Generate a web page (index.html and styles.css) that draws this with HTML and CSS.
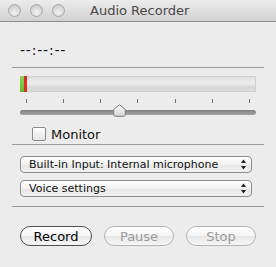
FILE: index.html
```html
<!DOCTYPE html>
<html>
<head>
<meta charset="utf-8">
<link rel="stylesheet" href="styles.css">
</head>
<body>
<div class="window">
  <div class="titlebar">
    <div class="lights">
      <span class="light"></span><span class="light"></span><span class="light"></span>
    </div>
    <div class="title">Audio Recorder</div>
  </div>
  <div class="content">
    <div class="timer">--:--:--</div>
    <div class="sep sep1"></div>
    <div class="meter">
      <span class="lvl green"></span><span class="lvl red"></span>
    </div>
    <div class="ticks">
      <span></span><span></span><span></span><span></span><span></span><span></span><span></span>
    </div>
    <div class="slider">
      <div class="track"></div>
      <svg class="knob" width="13" height="13" viewBox="0 0 13 13">
        <defs>
          <linearGradient id="kg" x1="0" y1="0" x2="0" y2="1">
            <stop offset="0" stop-color="#ffffff"/>
            <stop offset="1" stop-color="#d4d4d4"/>
          </linearGradient>
        </defs>
        <path d="M6.5 0.7 L12.3 5.5 L12.3 10.5 Q12.3 12.3 10.5 12.3 L2.5 12.3 Q0.7 12.3 0.7 10.5 L0.7 5.5 Z" fill="url(#kg)" stroke="#7a7a7a" stroke-width="1"/>
      </svg>
    </div>
    <label class="check">
      <span class="box"></span>
      <span class="check-label">Monitor</span>
    </label>
    <div class="sep sep2"></div>
    <div class="popups">
      <div class="popup">
        <span>Built-in Input: Internal microphone</span>
        <svg class="arrows" width="7" height="11" viewBox="0 0 7 11"><path d="M3.5 0.5 L6 4 L1 4 Z M1 7 L6 7 L3.5 10.5 Z" fill="#222"/></svg>
      </div>
      <div class="popup">
        <span>Voice settings</span>
        <svg class="arrows" width="7" height="11" viewBox="0 0 7 11"><path d="M3.5 0.5 L6 4 L1 4 Z M1 7 L6 7 L3.5 10.5 Z" fill="#222"/></svg>
      </div>
    </div>
    <div class="sep sep3"></div>
    <div class="buttons">
      <button class="btn primary">Record</button>
      <button class="btn disabled">Pause</button>
      <button class="btn disabled">Stop</button>
    </div>
  </div>
</div>
</body>
</html>
```
FILE: styles.css
```css
html, body {
  margin: 0;
  padding: 0;
  background: #ececec;
}
.window {
  width: 276px;
  height: 267px;
  background: #ececec;
  font-family: "DejaVu Sans", "Liberation Sans", sans-serif;
  overflow: hidden;
}
.titlebar {
  height: 21px;
  border-bottom: 1px solid #8e8e8e;
  background: linear-gradient(#ececec, #d2d2d2);
  display: flex;
  align-items: center;
  position: relative;
}
.lights {
  display: flex;
  gap: 9px;
  margin-left: 8px;
}
.light {
  width: 11px;
  height: 11px;
  border-radius: 50%;
  border: 1px solid #a8a8a8;
  background: radial-gradient(circle at 50% 70%, #f4f4f4 0%, #d8d8d8 55%, #c4c4c4 100%);
}
.title {
  margin-left: 25px;
  font-size: 13px;
  color: #4a4a4a;
}
.content {
  padding: 0 12px;
}
.timer {
  margin-top: 20px;
  padding-left: 8px;
  font-size: 14px;
  line-height: 16px;
  height: 16px;
  color: #111;
  letter-spacing: 0.8px;
}
.sep {
  height: 1px;
  background: #9a9a9a;
}
.sep1 {
  margin-top: 9px;
}
.meter {
  margin: 8px 8px 0;
  height: 16px;
  background: linear-gradient(#d4d4d4 0%, #e8e8e8 25%, #ebebeb 50%, #d8d8d8 70%, #dcdcdc 100%);
  display: flex;
  box-shadow: inset 0 0 0 1px #d0d0d0;
}
.lvl {
  height: 16px;
}
.green {
  width: 4px;
  background: linear-gradient(#8fd25a, #67b82f);
}
.red {
  width: 3px;
  background: #dd2e1c;
}
.ticks {
  margin: 7px 14px 0;
  height: 4px;
  display: flex;
  justify-content: space-between;
}
.ticks span {
  width: 1px;
  height: 4px;
  background: #777;
}
.slider {
  margin: 1px 8px 0;
  height: 12px;
  position: relative;
}
.track {
  position: absolute;
  left: 0;
  right: 0;
  top: 6px;
  height: 5px;
  border-radius: 3px;
  background: linear-gradient(#7e7e7e, #a6a6a6);
}
.knob {
  position: absolute;
  left: 93px;
  top: 0;
}
.check {
  margin: 11px 0 0 20px;
  display: flex;
  align-items: center;
  height: 14px;
}
.box {
  width: 12px;
  height: 12px;
  border: 1px solid #8a8a8a;
  border-radius: 2px;
  background: linear-gradient(#ffffff, #e4e4e4);
}
.check-label {
  margin-left: 5px;
  font-size: 13px;
  color: #111;
}
.sep2 {
  margin-top: 3px;
}
.popups {
  margin: 11px 12px 0 8px;
  display: flex;
  flex-direction: column;
  gap: 7px;
}
.popup {
  height: 15px;
  border: 1px solid #8e8e8e;
  border-radius: 4px;
  background: linear-gradient(#ffffff 0%, #f2f2f2 50%, #e6e6e6 51%, #f0f0f0 100%);
  display: flex;
  align-items: center;
  justify-content: space-between;
  padding: 0 4px 0 8px;
  font-size: 11px;
  color: #111;
}
.arrows {
  display: block;
}
.sep3 {
  margin-top: 9px;
}
.buttons {
  margin: 19px 8px 0;
  display: flex;
  justify-content: space-between;
}
.btn {
  width: 72px;
  height: 20px;
  border-radius: 10px;
  font-family: "DejaVu Sans", "Liberation Sans", sans-serif;
  font-size: 13px;
  padding: 0;
  background: linear-gradient(#ffffff 0%, #f4f4f4 50%, #e8e8e8 51%, #f6f6f6 100%);
}
.primary {
  border: 1px solid #4e4e4e;
  color: #000;
}
.disabled {
  border: 1px solid #b4b4b4;
  color: #9a9a9a;
  width: 70px;
}
```
